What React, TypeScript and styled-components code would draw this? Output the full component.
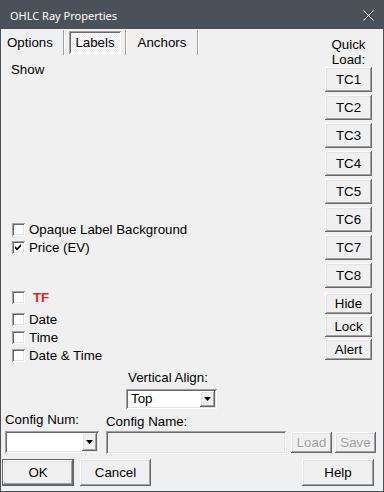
import styled, { createGlobalStyle, css } from "styled-components"

const GlobalStyle = createGlobalStyle`
  html, body {
    margin: 0;
    padding: 0;
  }
  body {
    background: #f0f0f0;
    font-family: "Liberation Sans", Arial, sans-serif;
    font-size: 13.3px;
    color: #000;
  }
  * {
    box-sizing: border-box;
  }
`

const raised = css`
  background: #f0f0f0;
  box-shadow:
    inset -1px -1px #696969,
    inset 1px 1px #ffffff,
    inset -2px -2px #a0a0a0,
    inset 2px 2px #e3e3e3;
`

const sunken = css`
  box-shadow:
    inset 1px 1px #a0a0a0,
    inset -1px -1px #ffffff,
    inset 2px 2px #696969,
    inset -2px -2px #e3e3e3;
`

const Window = styled.div`
  width: 384px;
  height: 492px;
  display: flex;
  flex-direction: column;
  background: #f0f0f0;
  border: 1px solid #4a5158;
  border-top: 0;
`

const TitleBar = styled.div`
  height: 29px;
  flex-shrink: 0;
  display: flex;
  align-items: center;
  justify-content: space-between;
  padding: 2px 9px 0 9px;
  background: #4a5158;
  color: #fff;
  font-family: "Noto Sans", "Liberation Sans", sans-serif;
  font-size: 11px;
`

const CloseIcon = styled.svg`
  width: 11px;
  height: 11px;
  display: block;
`

const TopSection = styled.div`
  display: flex;
`

const LeftPane = styled.div`
  flex: 1;
  display: flex;
  flex-direction: column;
`

const TabStrip = styled.div`
  display: flex;
  height: 25px;
  margin-top: 1px;
`

const TabCell = styled.div<{ $w: number; $left?: boolean }>`
  width: ${(p) => p.$w}px;
  display: flex;
  align-items: center;
  justify-content: ${(p) => (p.$left ? "flex-start" : "center")};
  padding-left: ${(p) => (p.$left ? 6 : 0)}px;
`

const TabSep = styled.div`
  width: 2px;
  border-left: 1px solid #a0a0a0;
  border-right: 1px solid #ffffff;
`

const PressedTab = styled.div`
  width: 52px;
  height: 23px;
  display: flex;
  align-items: center;
  justify-content: center;
  background: repeating-conic-gradient(#ffffff 0 25%, #ebebeb 0 50%) 0 0 / 2px 2px;
  box-shadow:
    inset 1px 1px #a0a0a0,
    inset -1px -1px #ffffff,
    inset 2px 2px #696969;
`

const SectionLabel = styled.div`
  margin: 7px 0 0 10px;
  line-height: 15px;
`

const CheckList = styled.div`
  display: flex;
  flex-direction: column;
  margin-top: 143px;
`

const CheckRow = styled.div<{ $top?: number }>`
  height: 18px;
  margin-top: ${(p) => p.$top ?? 0}px;
  padding-left: 11px;
  display: flex;
  align-items: center;
  gap: 4px;
`

const Box = styled.div`
  width: 13px;
  height: 13px;
  background: #fff;
  ${sunken};
  display: flex;
  align-items: center;
  justify-content: center;
`

const RowText = styled.span<{ $red?: boolean }>`
  ${(p) =>
    p.$red &&
    css`
      color: #ee1c25;
      font-weight: bold;
      margin-left: 4px;
    `}
`

const RightPane = styled.div`
  width: 47px;
  margin-right: 11px;
  padding-top: 8px;
  display: flex;
  flex-direction: column;
`

const QuickLabel = styled.div`
  text-align: center;
  line-height: 15px;
`

const ButtonStack = styled.div<{ $gap: number; $top?: number }>`
  display: flex;
  flex-direction: column;
  gap: ${(p) => p.$gap}px;
  margin-top: ${(p) => p.$top ?? 0}px;
`

const PushButton = styled.div<{ $h: number; $w?: number; $disabled?: boolean; $default?: boolean }>`
  height: ${(p) => p.$h}px;
  width: ${(p) => (p.$w ? `${p.$w}px` : "auto")};
  display: flex;
  align-items: center;
  justify-content: center;
  ${raised};
  ${(p) =>
    p.$disabled &&
    css`
      color: #a0a0a0;
      text-shadow: 1px 1px #ffffff;
    `}
  ${(p) =>
    p.$default &&
    css`
      border: 1px solid #646464;
    `}
`

const AlignGroup = styled.div`
  margin: 6px 0 0 125px;
  display: flex;
  flex-direction: column;
  align-items: flex-start;
`

const FieldLabel = styled.div<{ $pad?: number; $dy?: number }>`
  line-height: 15px;
  padding-left: ${(p) => p.$pad ?? 0}px;
  margin-top: ${(p) => p.$dy ?? 0}px;
`

const Select = styled.div<{ $w: number; $h: number; $top: number }>`
  width: ${(p) => p.$w}px;
  height: ${(p) => p.$h}px;
  margin-top: ${(p) => p.$top}px;
  background: #fff;
  ${sunken};
  padding: 2px;
  display: flex;
  align-items: center;
`

const SelectText = styled.span`
  flex: 1;
  padding-left: 3px;
  margin-top: -2px;
`

const DropButton = styled.div`
  width: 15px;
  align-self: stretch;
  display: flex;
  align-items: center;
  justify-content: center;
  ${raised};
`

const ConfigRow = styled.div`
  margin-top: 3px;
  padding-left: 4px;
  display: flex;
  align-items: flex-start;
`

const FieldGroup = styled.div<{ $ml?: number }>`
  display: flex;
  flex-direction: column;
  margin-left: ${(p) => p.$ml ?? 0}px;
`

const TextInput = styled.div`
  width: 180px;
  height: 23px;
  margin-top: 2px;
  background: #f0f0f0;
  ${sunken};
`

const SideButtons = styled.div`
  display: flex;
  gap: 3px;
  margin: 20px 0 0 5px;
`

const ButtonRow = styled.div`
  display: flex;
  gap: 6px;
  margin-top: 5px;
  padding: 0 9px 0 1px;
`

const Spacer = styled.div`
  flex: 1;
`

function Check({ checked }: { checked?: boolean }) {
  return (
    <Box>
      {checked && (
        <svg width="9" height="9" viewBox="0 0 9 9">
          <polygon points="1,3 3,5 7,1 7,3.5 3,7.5 1,5.5" fill="#000" />
        </svg>
      )}
    </Box>
  )
}

function DropArrow() {
  return (
    <DropButton>
      <svg width="7" height="4" viewBox="0 0 7 4">
        <polygon points="0,0 7,0 3.5,4" fill="#000" />
      </svg>
    </DropButton>
  )
}

export default function App() {
  return (
    <>
      <GlobalStyle />
      <Window>
        <TitleBar>
          <span>OHLC Ray Properties</span>
          <CloseIcon viewBox="0 0 11 11">
            <path d="M0.5 0.5 L10.5 10.5 M10.5 0.5 L0.5 10.5" stroke="#fff" strokeWidth="1" />
          </CloseIcon>
        </TitleBar>

        <TopSection>
          <LeftPane>
            <TabStrip>
              <TabCell $w={62} $left>
                Options
              </TabCell>
              <TabSep />
              <TabCell $w={60}>
                <PressedTab>Labels</PressedTab>
              </TabCell>
              <TabSep />
              <TabCell $w={70}>Anchors</TabCell>
              <TabSep />
            </TabStrip>

            <SectionLabel>Show</SectionLabel>

            <CheckList>
              <CheckRow>
                <Check />
                <RowText>Opaque Label Background</RowText>
              </CheckRow>
              <CheckRow>
                <Check checked />
                <RowText>Price (EV)</RowText>
              </CheckRow>
              <CheckRow $top={32}>
                <Check />
                <RowText $red>TF</RowText>
              </CheckRow>
              <CheckRow $top={4}>
                <Check />
                <RowText>Date</RowText>
              </CheckRow>
              <CheckRow>
                <Check />
                <RowText>Time</RowText>
              </CheckRow>
              <CheckRow>
                <Check />
                <RowText>Date &amp; Time</RowText>
              </CheckRow>
            </CheckList>
          </LeftPane>

          <RightPane>
            <QuickLabel>
              Quick
              <br />
              Load:
            </QuickLabel>
            <ButtonStack $gap={3}>
              {["TC1", "TC2", "TC3", "TC4", "TC5", "TC6", "TC7", "TC8"].map((t) => (
                <PushButton key={t} $h={25}>
                  {t}
                </PushButton>
              ))}
            </ButtonStack>
            <ButtonStack $gap={2} $top={5}>
              <PushButton $h={21}>Hide</PushButton>
              <PushButton $h={21}>Lock</PushButton>
              <PushButton $h={21}>Alert</PushButton>
            </ButtonStack>
          </RightPane>
        </TopSection>

        <AlignGroup>
          <FieldLabel $pad={2}>Vertical Align:</FieldLabel>
          <Select $w={91} $h={20} $top={4}>
            <SelectText>Top</SelectText>
            <DropArrow />
          </Select>
        </AlignGroup>

        <ConfigRow>
          <FieldGroup>
            <FieldLabel>Config Num:</FieldLabel>
            <Select $w={94} $h={22} $top={4}>
              <SelectText />
              <DropArrow />
            </Select>
          </FieldGroup>
          <FieldGroup $ml={7}>
            <FieldLabel $dy={2}>Config Name:</FieldLabel>
            <TextInput />
          </FieldGroup>
          <SideButtons>
            <PushButton $h={21} $w={41} $disabled>
              Load
            </PushButton>
            <PushButton $h={21} $w={41} $disabled>
              Save
            </PushButton>
          </SideButtons>
        </ConfigRow>

        <ButtonRow>
          <PushButton $h={27} $w={72} $default>
            OK
          </PushButton>
          <PushButton $h={27} $w={71}>
            Cancel
          </PushButton>
          <Spacer />
          <PushButton $h={27} $w={72}>
            Help
          </PushButton>
        </ButtonRow>
      </Window>
    </>
  )
}
